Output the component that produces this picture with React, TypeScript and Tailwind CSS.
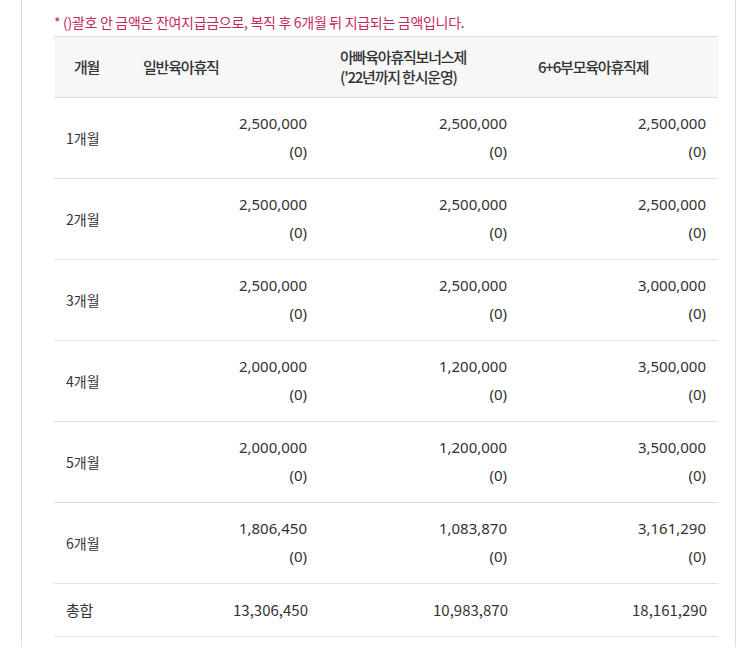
import React from "react";

const rows = [
  ["1개월", "2,500,000", "2,500,000", "2,500,000"],
  ["2개월", "2,500,000", "2,500,000", "2,500,000"],
  ["3개월", "2,500,000", "2,500,000", "3,000,000"],
  ["4개월", "2,000,000", "1,200,000", "3,500,000"],
  ["5개월", "2,000,000", "1,200,000", "3,500,000"],
  ["6개월", "1,806,450", "1,083,870", "3,161,290"],
];

const kr = "font-['Noto_Sans_CJK_KR','Noto_Sans',sans-serif]";
const num = "font-['Noto_Sans','Noto_Sans_CJK_KR',sans-serif]";

function ValueCell({ v }: { v: string }) {
  return (
    <div className={`flex flex-col items-end justify-center pr-[12px] pb-[2px] text-[15px] leading-[28px] text-[#333] ${num}`}>
      <span>{v}</span>
      <span>(0)</span>
    </div>
  );
}

export default function App() {
  return (
    <div className="h-[647px] w-[755px] overflow-hidden bg-white">
      <div className="ml-[21px] h-full w-[715px] border-x border-[#dddddd] pl-[32px]">
        <p className={`pt-[12px] pb-[4px] text-[14px] leading-[20px] tracking-[-0.3px] text-[#c3285c] ${kr}`}>
          * ()괄호 안 금액은 잔여지급금으로, 복직 후 6개월 뒤 지급되는 금액입니다.
        </p>
        <div className="w-[664px]">
          <div className={`grid h-[62px] grid-cols-[65px_200px_200px_199px] items-center border-y border-[#dddddd] bg-[#f7f7f7] text-[15px] font-medium leading-[20px] tracking-[-1.2px] text-[#333] ${kr}`}>
            <div className="text-center">개월</div>
            <div className="pl-[24px]">일반육아휴직</div>
            <div className="pl-[21px]">
              아빠육아휴직보너스제
              <br />
              ('22년까지 한시운영)
            </div>
            <div className="pl-[19px]">6+6부모육아휴직제</div>
          </div>
          {rows.map((r) => (
            <div
              key={r[0]}
              className="grid h-[81px] grid-cols-[65px_200px_200px_199px] border-b border-[#e0e0e0]"
            >
              <div className={`flex items-center pl-[12px] text-[14px] text-[#333] ${kr}`}>{r[0]}</div>
              <ValueCell v={r[1]} />
              <ValueCell v={r[2]} />
              <ValueCell v={r[3]} />
            </div>
          ))}
          <div
            className={`grid h-[53px] grid-cols-[65px_200px_200px_199px] items-center border-b border-[#e0e0e0] text-[15px] text-[#333] ${kr}`}
          >
            <div className="pl-[12px] tracking-[-0.4px]">총합</div>
            <div className="pr-[11px] text-right">13,306,450</div>
            <div className="pr-[11px] text-right">10,983,870</div>
            <div className="pr-[11px] text-right">18,161,290</div>
          </div>
        </div>
      </div>
    </div>
  );
}
